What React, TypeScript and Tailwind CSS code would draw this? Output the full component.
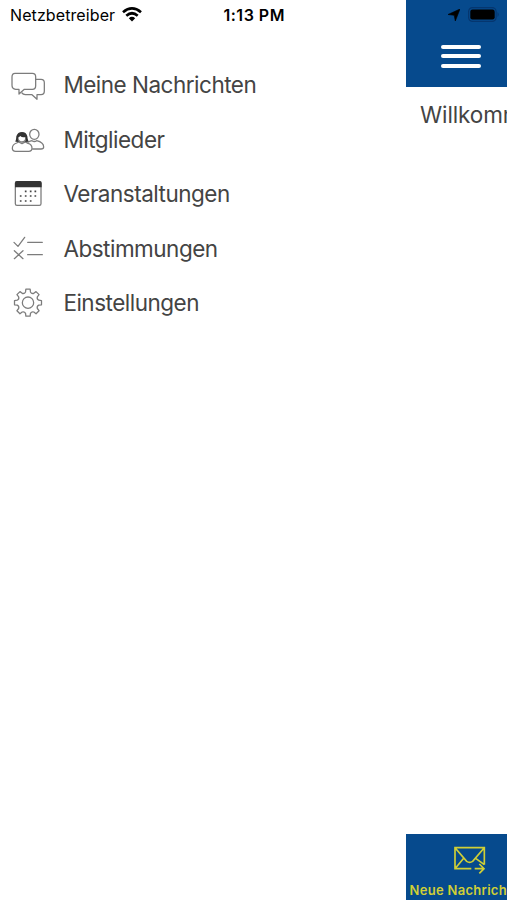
import type { ReactNode } from "react";

const GEAR_PATH =
  Array.from({ length: 8 }, (_, i) => {
    const point = (deg: number, r: number) => {
      const a = ((i * 45 + deg) * Math.PI) / 180;
      return `${(84 + r * Math.cos(a)).toFixed(1)} ${(70 + r * Math.sin(a)).toFixed(1)}`;
    };
    return `${i === 0 ? "M" : "L"}${point(-13, 33)}L${point(-9, 41)}L${point(9, 41)}L${point(13, 33)}Q${point(22.5, 28)} ${point(32, 33)}`;
  }).join("") + "Z";

interface IconProps {
  offset: number;
  children: ReactNode;
}

function MenuIcon({ offset, children }: IconProps) {
  return (
    <svg
      viewBox={`0 ${offset} 180 150`}
      className="h-[50px] w-[60px] shrink-0"
      fill="none"
      stroke="#7c7c7c"
      strokeWidth="3.8"
      strokeLinecap="round"
      strokeLinejoin="round"
      aria-hidden="true"
    >
      {children}
    </svg>
  );
}

const menuItems = [
  {
    label: "Meine Nachrichten",
    icon: (
      <MenuIcon offset={0}>
        <path d="M45 40H97Q107 40 107 50V77Q107 88 97 88H73L57 102V88H47Q36 87 36 76V51Q36 40 45 40Z" />
        <path d="M107 58H123Q133 58 133 68V93Q133 104 123 104H111V118L96 104H76Q69 103 66 99" />
      </MenuIcon>
    ),
  },
  {
    label: "Mitglieder",
    icon: (
      <MenuIcon offset={-1}>
        <ellipse cx="103" cy="57" rx="14" ry="15" />
        <path d="M84 81Q91 76 96 76Q103 81 110 76Q131 81 131 95Q131 101 123 101H98" />
        <path d="M56 80L50 83Q37 87 37 99Q37 108 47 108H86Q96 108 96 99Q96 87 84 84L76 80L66 85Z" />
        <path d="M54 64V70Q56 80 66 80Q76 80 77 70V64" />
        <path
          d="M46 79Q49 70 49 63Q53 50 66 50Q79 50 82 63Q82 70 86 79L75 80Q79 73 77 65Q66 68 61 62Q57 66 54 66Q52 74 57 80Z"
          fill="#333333"
          stroke="none"
        />
      </MenuIcon>
    ),
  },
  {
    label: "Veranstaltungen",
    icon: (
      <MenuIcon offset={-2}>
        <rect x="46" y="36" width="77" height="71" rx="5" />
        <path d="M45 53V40Q45 34 51 34H119Q125 34 125 40V53Z" fill="#333333" stroke="none" />
        <path
          d="M77 65h.1M92 65h.1M106 65h.1M62 79h.1M77 79h.1M92 79h.1M106 79h.1M62 94h.1M77 94h.1M92 94h.1"
          stroke="#444444"
          strokeWidth="5"
          strokeLinecap="square"
        />
      </MenuIcon>
    ),
  },
  {
    label: "Abstimmungen",
    icon: (
      <MenuIcon offset={-3}>
        <path d="M42 52L54 64L74 37M83 52H127M43 77L69 101M69 77L43 101M83 89H127" />
      </MenuIcon>
    ),
  },
  {
    label: "Einstellungen",
    icon: (
      <MenuIcon offset={-4}>
        <path d={GEAR_PATH} />
        <circle cx="84" cy="70" r="17" />
      </MenuIcon>
    ),
  },
];

function SideMenu() {
  return (
    <nav className="flex w-[405.5px] shrink-0 flex-col">
      <div className="flex h-[57.7px] items-start pt-[5px] pl-[10px] text-black">
        <span className="w-[106px] text-[16px] leading-5 tracking-[0.1px]">Netzbetreiber</span>
        <svg viewBox="0 0 20 15" className="mt-[2px] ml-[5.5px] h-[15px] w-5" fill="none" stroke="#000" strokeWidth="2.7">
          <path d="M1 5.2Q10-2.4 19 5.2M4.3 8.7Q10 3.8 15.7 8.7" />
          <path d="M6.8 11.2Q10 8.5 13.2 11.2L10 14.4Z" fill="#000" stroke="none" />
        </svg>
        <span className="ml-[82px] whitespace-nowrap text-[16px] leading-5 font-semibold tracking-[0.5px]">1:13 PM</span>
      </div>
      {menuItems.map((item) => (
        <a key={item.label} className="flex h-[54.6px] items-center">
          {item.icon}
          <span className="ml-[3.4px] whitespace-nowrap text-[22.5px] leading-8 tracking-[-0.5px] text-[#444444]">
            {item.label}
          </span>
        </a>
      ))}
    </nav>
  );
}

function Page() {
  return (
    <main className="flex w-[101.5px] shrink-0 flex-col overflow-hidden">
      <header className="h-[87px] bg-[#064a8d]">
        <div className="flex h-7 items-center pl-[42px]">
          <svg viewBox="0 0 12 12" className="mt-px h-3 w-3" fill="#000">
            <path d="M12 0L7.3 12L6.2 6.3L0 5.5Z" stroke="#000" strokeWidth=".6" strokeLinejoin="round" />
          </svg>
          <svg viewBox="0 0 32 15" className="ml-[8px] h-[15px] w-8 shrink-0">
            <rect x=".6" y=".6" width="27.5" height="13.8" rx="4" fill="none" stroke="#05366f" strokeWidth="1.2" />
            <rect x="2.3" y="2.5" width="24.4" height="10" rx="2.2" fill="#000" />
            <path d="M29.5 5Q32 7.5 29.5 10Z" fill="#05366f" />
          </svg>
        </div>
        <button className="mt-[16.8px] ml-[35px] flex flex-col gap-[5.6px]" aria-label="Menü">
          <span className="h-1 w-10 rounded-full bg-white" />
          <span className="h-1 w-10 rounded-full bg-white" />
          <span className="h-1 w-10 rounded-full bg-white" />
        </button>
      </header>
      <h1 className="flex-1 pt-[11.5px] pl-[14.5px] whitespace-nowrap text-[22.5px] leading-8 tracking-[-0.1px] text-[#444444]">
        Willkommen
      </h1>
      <footer className="h-[66px] bg-[#064a8d] text-[#d0cf36]">
        <svg viewBox="0 0 96 84" className="mt-3 ml-[48px] h-7 w-8" fill="none" stroke="currentColor" strokeWidth="5">
          <path d="M52 68H3V5H91V56M3 5L38 46Q47 52 56 46L91 5M3 68L29 37M91 56L65 37M62 68H88M76 54L90 68L76 82" />
        </svg>
        <span className="mt-[6px] ml-[4px] block whitespace-nowrap text-[13px] leading-5 font-semibold tracking-[0.3px]">
          Neue Nachricht
        </span>
      </footer>
    </main>
  );
}

export default function App() {
  return (
    <div className="flex h-[900px] w-[507px] overflow-hidden bg-white font-[Inter,sans-serif]">
      <SideMenu />
      <Page />
    </div>
  );
}
